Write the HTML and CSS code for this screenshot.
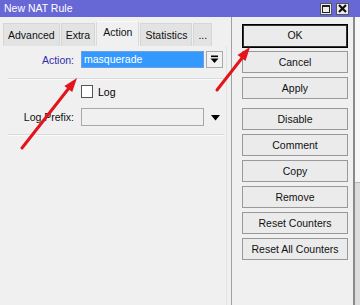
FILE: index.html
```html
<!DOCTYPE html>
<html>
<head>
<meta charset="utf-8">
<link rel="stylesheet" href="styles.css">
</head>
<body>
<div class="window">
  <div class="titlebar">
    <span class="title">New NAT Rule</span>
    <div class="tb-buttons">
      <span class="tb-btn max"><span class="max-inner"></span></span>
      <span class="tb-btn close">
        <svg width="9" height="9" viewBox="0 0 9 9"><path d="M1 1 L8 8 M8 1 L1 8" stroke="#111" stroke-width="2.2"/></svg>
      </span>
    </div>
  </div>
  <div class="main">
    <div class="left">
      <div class="tabs">
        <div class="tab">Advanced</div>
        <div class="tab">Extra</div>
        <div class="tab active">Action</div>
        <div class="tab">Statistics</div>
        <div class="tab">...</div>
      </div>
      <div class="panel">
        <div class="row row-action">
          <label class="lbl blue">Action:</label>
          <div class="field selected"><span class="sel-text">masquerade</span></div>
          <div class="dd-btn">
            <svg width="9" height="9" viewBox="0 0 9 9"><rect x="1" y="0.5" width="7" height="1.6" fill="#000"/><path d="M0.5 3.5 H8.5 L4.5 8 Z" fill="#000"/></svg>
          </div>
        </div>
        <div class="sep sep1"></div>
        <div class="row row-check">
          <span class="checkbox"></span>
          <span class="check-lbl">Log</span>
        </div>
        <div class="row row-prefix">
          <label class="lbl">Log Prefix:</label>
          <div class="field empty"></div>
          <svg class="tri" width="9" height="6" viewBox="0 0 9 6"><path d="M0 0 H9 L4.5 5.5 Z" fill="#000"/></svg>
        </div>
        <div class="sep sep2"></div>
      </div>
    </div>
    <div class="right">
      <div class="btn ok">OK</div>
      <div class="btn cancel">Cancel</div>
      <div class="btn">Apply</div>
      <div class="btn disable">Disable</div>
      <div class="btn">Comment</div>
      <div class="btn">Copy</div>
      <div class="btn">Remove</div>
      <div class="btn">Reset Counters</div>
      <div class="btn">Reset All Counters</div>
    </div>
    <div class="edge">
      <div class="edge-top"></div>
      <div class="edge-bottom"></div>
    </div>
  </div>
  <svg class="arrows" width="360" height="305" viewBox="0 0 360 305">
    <line x1="22" y1="148" x2="69" y2="88" stroke="#e3141b" stroke-width="3" stroke-linecap="round"/>
    <path d="M77 78 L72.2 92.1 L64.4 85.9 Z" fill="#e3141b"/>
    <line x1="217" y1="90" x2="242" y2="58" stroke="#e3141b" stroke-width="3" stroke-linecap="round"/>
    <path d="M250 47 L245.5 61.1 L237.5 55.1 Z" fill="#e3141b"/>
  </svg>
</div>
</body>
</html>
```
FILE: styles.css
```css
* { box-sizing: border-box; }
body { margin: 0; background: #f0f0f0; }
.window {
  position: relative;
  width: 360px;
  height: 305px;
  overflow: hidden;
  background: #f0f0f0;
  font-family: "Liberation Sans", Arial, sans-serif;
  font-size: 10.5px;
  color: #000;
}
.titlebar {
  height: 17px;
  background: #6767d6;
  display: flex;
  align-items: center;
  justify-content: space-between;
  padding: 0 11px 0 4px;
}
.title { color: #fff; font-size: 10.5px; line-height: 17px; }
.tb-buttons { display: flex; gap: 4px; align-items: center; }
.tb-btn {
  width: 12px;
  height: 12px;
  background: #ececec;
  border: 1px solid #555;
  display: flex;
  align-items: center;
  justify-content: center;
}
.tb-btn.close { width: 13px; }
.max-inner {
  width: 8px;
  height: 8px;
  border: 1px solid #222;
  border-top-width: 2px;
}
.main { display: flex; height: 288px; }
.left {
  width: 232px;
  border-right: 1px solid #a0a0a0;
  padding-right: 4px;
  display: flex;
  flex-direction: column;
}
.tabs {
  height: 29px;
  display: flex;
  align-items: flex-end;
  padding-left: 3px;
  gap: 1px;
}
.tab {
  height: 23px;
  line-height: 22px;
  padding: 0 4px;
  background: #e3e3e3;
  border: 1px solid #d6d6d6;
  border-bottom: none;
  color: #111;
}
.tab.active {
  height: 25px;
  line-height: 21px;
  background: #f0f0f0;
  padding: 0 6px;
  border-color: #dadada;
  border-top-color: #fafafa;
}
.panel {
  flex: 1;
  border-right: 1px solid #e2e2e2;
  padding-top: 5px;
  display: flex;
  flex-direction: column;
}
.row { display: flex; align-items: center; }
.lbl {
  width: 74px;
  text-align: right;
  margin-right: 7px;
  color: #111;
}
.lbl.blue { color: #2f2fa8; }
.row-action { height: 17px; }
.field {
  width: 123px;
  border: 1px solid #a8a8a8;
}
.field.selected {
  height: 17px;
  background: #3399ff;
  border-color: #6f9fd8;
  padding-left: 2px;
  line-height: 15px;
}
.sel-text { color: #fff; }
.dd-btn {
  width: 17px;
  height: 17px;
  margin-left: 2px;
  border: 1px solid #a9a9a9;
  background: #f2f2f2;
  display: flex;
  align-items: center;
  justify-content: center;
}
.sep {
  height: 2px;
  border-top: 1px solid #d9d9d9;
  border-bottom: 1px solid #fbfbfb;
  margin: 0 2px 0 8px;
}
.sep1 { margin-top: 10px; }
.row-check { margin-top: 5px; padding-left: 81px; height: 13px; }
.checkbox {
  width: 12px;
  height: 13px;
  border: 1px solid #555;
  background: #fff;
}
.check-lbl { margin-left: 5px; }
.row-prefix { margin-top: 10px; height: 18px; }
.field.empty { height: 18px; background: #f0f0f0; }
.tri { margin-left: 7px; margin-top: 1px; }
.sep2 { margin-top: 8px; }
.right {
  width: 121px;
  padding: 7px 0 0 10px;
  display: flex;
  flex-direction: column;
}
.btn {
  width: 106px;
  height: 22px;
  margin-top: 4px;
  border: 1px solid #999;
  background: #ebebeb;
  text-align: center;
  line-height: 20px;
  color: #111;
}
.btn.ok {
  margin-top: 0;
  height: 24px;
  line-height: 20px;
  border: 1px solid #000;
  box-shadow: inset 0 0 0 1px #333;
}
.btn.cancel { margin-top: 3px; }
.btn.disable { margin-top: 9px; }
.edge {
  flex: 1;
  border-left: 2px solid #8a8a8a;
  display: flex;
  flex-direction: column;
}
.edge-top { height: 166px; background: #f7f7f7; border-bottom: 1px solid #b8b8b8; }
.edge-bottom { flex: 1; background: #dcdcdc; }
.arrows { position: absolute; left: 0; top: 0; pointer-events: none; }
```
